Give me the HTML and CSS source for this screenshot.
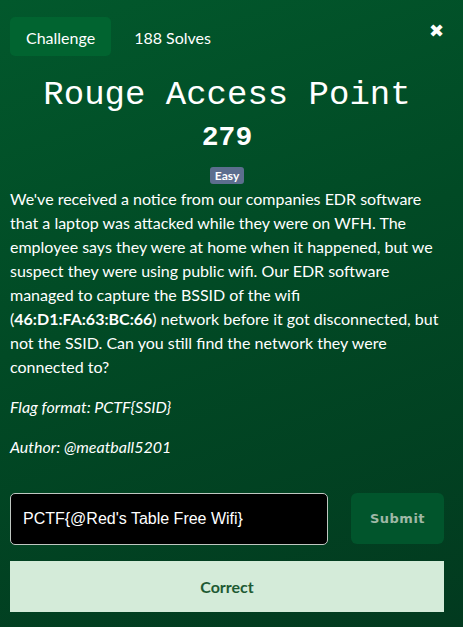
FILE: index.html
```html
<!DOCTYPE html>
<html>
<head>
<meta charset="utf-8">
<link rel="stylesheet" href="styles.css">
</head>
<body>
<div class="modal">
  <div class="header">
    <div class="tabs">
      <span class="tab active">Challenge</span>
      <span class="tab">188 Solves</span>
    </div>
    <span class="close">&#x2716;</span>
  </div>
  <h1 class="title">Rouge Access Point</h1>
  <div class="points">279</div>
  <div class="badge-row"><span class="badge">Easy</span></div>
  <div class="desc">
    <p>We've received a notice from our companies EDR software that a laptop was attacked while they were on WFH. The employee says they were at home when it happened, but we suspect they were using public wifi. Our EDR software managed to capture the BSSID of the wifi (<b>46:D1:FA:63:BC:66</b>) network before it got disconnected, but not the SSID. Can you still find the network they were connected to?</p>
    <p><i>Flag format: PCTF{SSID}</i></p>
    <p><i>Author: @meatball5201</i></p>
  </div>
  <div class="submit-row">
    <input class="flag-input" type="text" value="PCTF{@Red's Table Free Wifi}">
    <button class="submit">Submit</button>
  </div>
  <div class="result">Correct</div>
</div>
</body>
</html>
```
FILE: styles.css
```css
html, body {
  margin: 0;
  height: 100%;
}
body {
  background: linear-gradient(160deg, #02582c 0%, #014a25 45%, #023a1f 100%);
  font-family: Lato, "Noto Sans", sans-serif;
  color: #fff;
}
.modal {
  padding: 17px 19px 0 10px;
}
.header {
  display: flex;
  justify-content: space-between;
  align-items: flex-start;
}
.tabs {
  display: flex;
  align-items: center;
}
.tab {
  font-size: 16px;
  padding: 0 0 0 23px;
  height: 39px;
  line-height: 41px;
  border-radius: 5px;
}
.tab.active {
  background: #016430;
  padding: 0 16px;
}
.close {
  font-family: "DejaVu Sans", sans-serif;
  font-size: 18px;
  line-height: 20px;
  margin-top: 4px;
  margin-right: 0;
}
.title {
  font-family: "Liberation Mono", monospace;
  font-weight: normal;
  font-size: 34px;
  text-align: center;
  margin: 20px 0 0 0;
  line-height: 38px;
}
.points {
  font-family: "Liberation Mono", monospace;
  font-weight: bold;
  font-size: 28px;
  text-align: center;
  line-height: 34px;
  margin-top: 7px;
}
.badge-row {
  text-align: center;
  margin-top: 10px;
  line-height: 17px;
}
.badge {
  display: inline-block;
  background: #5c6e8e;
  color: #fff;
  font-weight: bold;
  font-size: 12px;
  padding: 0 5px;
  border-radius: 3px;
  line-height: 17px;
}
.desc {
  font-size: 16px;
  line-height: 24px;
  margin-top: 3px;
}
.desc p {
  margin: 0 0 16px 0;
}
.submit-row {
  display: flex;
  gap: 23px;
  margin-top: 34px;
}
.flag-input {
  flex: 0 0 318px;
  box-sizing: border-box;
  height: 52px;
  background: #000;
  color: #fff;
  border: 1px solid #bfc7c1;
  border-radius: 5px;
  padding: 0 12px;
  font-family: "Liberation Sans", Arial, sans-serif;
  font-size: 16px;
  outline: none;
}
.submit {
  flex: 0 0 93px;
  height: 51px;
  background: #01552c;
  border: none;
  border-radius: 6px;
  color: #9fb8a6;
  font-family: "DejaVu Sans", sans-serif;
  font-weight: bold;
  font-size: 13px;
  letter-spacing: 0.5px;
}
.result {
  margin-top: 16px;
  width: 434px;
  height: 51px;
  line-height: 51px;
  background: #d4ebd9;
  color: #1e5a33;
  text-align: center;
  font-size: 16px;
  font-weight: bold;
}
```
